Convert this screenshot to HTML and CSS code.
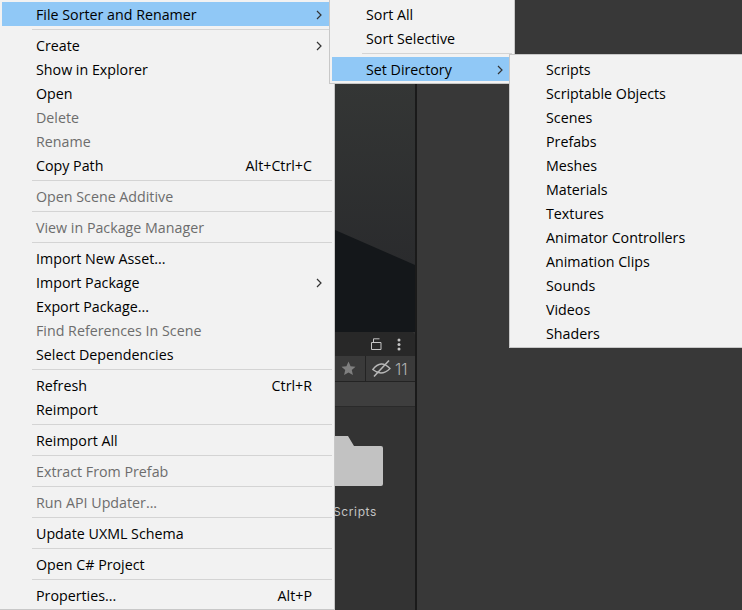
FILE: index.html
```
<!DOCTYPE html>
<html lang="en">
<head>
<meta charset="utf-8">
<title>Context menu</title>
<link rel="stylesheet" href="styles.css">
</head>
<body>
<div class="desk">
  <section class="project">
    <div class="scene">
      <svg class="scene-art" viewBox="0 0 415 332" preserveAspectRatio="none"><defs><linearGradient id="sky" x1="0" y1="83" x2="0" y2="265" gradientUnits="userSpaceOnUse"><stop offset="0" stop-color="#343635"/><stop offset="1" stop-color="#2a2b2d"/></linearGradient></defs><rect width="415" height="332" fill="url(#sky)"/><polygon points="335,230 415,265 415,332 335,332" fill="#14171a"/></svg>
    </div>
    <div class="tabbar">
      <svg class="ico-lock" viewBox="0 0 11 12" width="11" height="12"><path d="M.5 4.500h9.500v7H.5zM2.500 4.500V.8h6" fill="none" stroke="#c4c4c4" stroke-width="1"/></svg>
      <svg class="ico-dots" viewBox="0 0 4 13" width="4" height="13"><circle cx="2" cy="2" r="1.500" fill="#c4c4c4"/><circle cx="2" cy="6.500" r="1.500" fill="#c4c4c4"/><circle cx="2" cy="11" r="1.500" fill="#c4c4c4"/></svg>
    </div>
    <div class="filters">
      <div class="filter-star"><svg viewBox="0 0 16 16" width="15" height="15"><path d="M8 .6l2.200 4.900 5.300.6-4 3.500 1.200 5.300L8 12.200l-4.700 2.700 1.200-5.300-4-3.500 5.300-.6z" fill="#7f7f7f"/></svg></div>
      <div class="filter-hidden"><svg viewBox="0 0 19 17" width="19" height="17"><path d="M.8 9.500Q9-1 18 8.500 9.500 17 .8 9.500z" fill="none" stroke="#b8b8b8" stroke-width="1.300"/><path d="M2 16.500L17 .5" stroke="#b8b8b8" stroke-width="1.500"/></svg><span>11</span></div>
    </div>
    <div class="crumbs"></div>
    <div class="assets">
      <div class="asset">
        <svg class="folder" viewBox="0 0 58 50" width="58" height="50"><path d="M2 0h21l6 10h27q2 0 2 2v36q0 2-2 2H2q-2 0-2-2V2q0-2 2-2z" fill="#c2c2c2"/></svg>
        <span class="asset-name">Scripts</span>
      </div>
    </div>
  </section>
  <div class="divider"></div>
  <section class="inspector"></section>

  <nav class="menu menu-main">
    <div class="row active"><span>File Sorter and Renamer</span><svg class="chev" viewBox="0 0 6 10" width="6" height="10"><path d="M1 1l4 4-4 4" fill="none" stroke="#333" stroke-width="1.200"/></svg></div>
    <div class="sep"></div>
    <div class="row"><span>Create</span><svg class="chev" viewBox="0 0 6 10" width="6" height="10"><path d="M1 1l4 4-4 4" fill="none" stroke="#333" stroke-width="1.200"/></svg></div>
    <div class="row"><span>Show in Explorer</span></div>
    <div class="row"><span>Open</span></div>
    <div class="row off"><span>Delete</span></div>
    <div class="row off"><span>Rename</span></div>
    <div class="row"><span>Copy Path</span><span class="keys">Alt+Ctrl+C</span></div>
    <div class="sep"></div>
    <div class="row off"><span>Open Scene Additive</span></div>
    <div class="sep"></div>
    <div class="row off"><span>View in Package Manager</span></div>
    <div class="sep"></div>
    <div class="row"><span>Import New Asset...</span></div>
    <div class="row"><span>Import Package</span><svg class="chev" viewBox="0 0 6 10" width="6" height="10"><path d="M1 1l4 4-4 4" fill="none" stroke="#333" stroke-width="1.200"/></svg></div>
    <div class="row"><span>Export Package...</span></div>
    <div class="row off"><span>Find References In Scene</span></div>
    <div class="row"><span>Select Dependencies</span></div>
    <div class="sep"></div>
    <div class="row"><span>Refresh</span><span class="keys">Ctrl+R</span></div>
    <div class="row"><span>Reimport</span></div>
    <div class="sep"></div>
    <div class="row"><span>Reimport All</span></div>
    <div class="sep"></div>
    <div class="row off"><span>Extract From Prefab</span></div>
    <div class="sep"></div>
    <div class="row off"><span>Run API Updater...</span></div>
    <div class="sep"></div>
    <div class="row"><span>Update UXML Schema</span></div>
    <div class="sep"></div>
    <div class="row"><span>Open C# Project</span></div>
    <div class="sep"></div>
    <div class="row"><span>Properties...</span><span class="keys">Alt+P</span></div>
  </nav>

  <nav class="menu menu-sort">
    <div class="row"><span>Sort All</span></div>
    <div class="row"><span>Sort Selective</span></div>
    <div class="sep"></div>
    <div class="row active"><span>Set Directory</span><svg class="chev" viewBox="0 0 6 10" width="6" height="10"><path d="M1 1l4 4-4 4" fill="none" stroke="#333" stroke-width="1.200"/></svg></div>
  </nav>

  <nav class="menu menu-dir">
    <div class="row"><span>Scripts</span></div>
    <div class="row"><span>Scriptable Objects</span></div>
    <div class="row"><span>Scenes</span></div>
    <div class="row"><span>Prefabs</span></div>
    <div class="row"><span>Meshes</span></div>
    <div class="row"><span>Materials</span></div>
    <div class="row"><span>Textures</span></div>
    <div class="row"><span>Animator Controllers</span></div>
    <div class="row"><span>Animation Clips</span></div>
    <div class="row"><span>Sounds</span></div>
    <div class="row"><span>Videos</span></div>
    <div class="row"><span>Shaders</span></div>
  </nav>
</div>
</body>
</html>
```
FILE: styles.css
```
* { box-sizing: border-box; }
html, body { margin: 0; height: 100%; overflow: hidden; }
.desk { position: relative; display: flex; width: 742px; height: 610px; background: #383838; overflow: hidden; }

.project { display: flex; flex-direction: column; width: 415px; flex: none; background: #333333; }
.scene { height: 332px; flex: none; }
.scene-art { display: block; width: 415px; height: 332px; }
.tabbar { height: 24px; flex: none; background: #282828; display: flex; align-items: center; justify-content: flex-end; gap: 15px; padding: 0 14px 0 0; border-radius: 0 4px 0 0; }
.filters { height: 26px; flex: none; display: flex; justify-content: flex-end; background: #3a3a3a; border-bottom: 1px solid #232323; }
.filter-star { width: 32px; padding-right: 2px; display: flex; align-items: center; justify-content: center; border-right: 1px solid #232323; }
.filter-hidden { width: 49px; display: flex; align-items: center; gap: 4px; padding-left: 6px; color: #b0b0b0; font: 300 16px/24px "Inter", sans-serif; }
.crumbs { height: 25px; flex: none; background: #3e3e3e; border-bottom: 1px solid #2a2a2a; }
.assets { flex: 1; display: flex; justify-content: flex-end; padding: 29px 32px 0 0; }
.asset { display: flex; flex-direction: column; align-items: center; gap: 18px; width: 58px; }
.folder { display: block; flex: none; }
.asset-name { color: #c4c4c4; font: 12px/16px "Inter", sans-serif; letter-spacing: .6px; margin-left: 2px; }

.divider { width: 2px; flex: none; background: #1a1a1a; }
.inspector { flex: 1; background: #383838; }

.menu { position: absolute; display: flex; flex-direction: column; padding: 2px; background: #f2f2f2; border: 1px solid #c8c8c8; color: #000; font: 14.250px/24px "Open Sans", "Noto Sans", sans-serif; }
.menu-main { left: -1px; top: -1px; width: 336px; height: 611px; }
.menu-sort { left: 329px; top: -1px; width: 186px; height: 85px; }
.menu-dir { left: 509px; top: 54px; width: 234px; height: 294px; }
.row { display: flex; align-items: center; justify-content: space-between; height: 24px; flex: none; padding: 2px 20px 0 34px; white-space: nowrap; }
.row.active { background: #90c8f6; margin-right: 3px; padding-right: 17px; }
.menu-sort .row.active { margin-right: -3px; padding-right: 22px; }
.row.off { color: #6d6d6d; }
.keys { margin-left: auto; }
.chev { flex: none; margin-right: -10px; }
.sep { height: 1px; flex: none; margin: 3px 0 3px 30px; background: #d4d4d4; }
```
